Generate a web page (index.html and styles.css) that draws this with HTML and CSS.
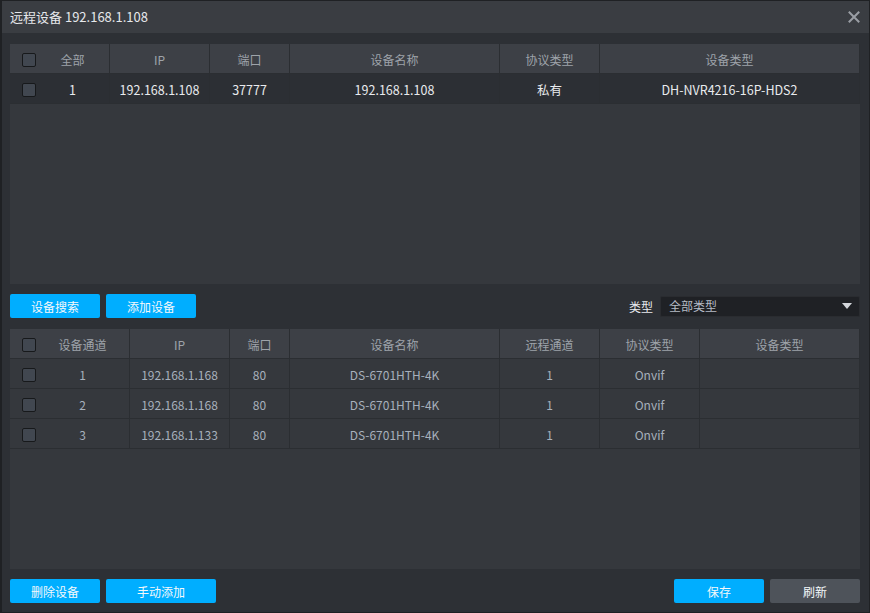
FILE: index.html
```html
<!DOCTYPE html>
<html lang="zh-CN">
<head>
<meta charset="utf-8">
<title>远程设备</title>
<link rel="stylesheet" href="styles.css">
</head>
<body>
<div class="window">
  <div class="titlebar">
    <span class="title">远程设备 192.168.1.108</span>
    <svg class="close" width="12" height="12" viewBox="0 0 12 12"><path d="M1.5 1.5 L10.5 10.5 M10.5 1.5 L1.5 10.5" stroke="#9a9ea5" stroke-width="2" stroke-linecap="square"/></svg>
  </div>
  <div class="content">
    <div class="panel">
      <div class="grid top-grid">
        <div class="hcell first"><span class="cb"></span><span class="lbl">全部</span></div>
        <div class="hcell">IP</div>
        <div class="hcell">端口</div>
        <div class="hcell">设备名称</div>
        <div class="hcell">协议类型</div>
        <div class="hcell">设备类型</div>
        <div class="cell sel first"><span class="cb"></span><span class="lbl">1</span></div>
        <div class="cell sel">192.168.1.108</div>
        <div class="cell sel">37777</div>
        <div class="cell sel">192.168.1.108</div>
        <div class="cell sel">私有</div>
        <div class="cell sel">DH-NVR4216-16P-HDS2</div>
      </div>
    </div>
    <div class="toolbar">
      <button class="btn">设备搜索</button>
      <button class="btn">添加设备</button>
      <div class="spacer"></div>
      <span class="type-label">类型</span>
      <div class="select"><span>全部类型</span><svg width="10" height="6" viewBox="0 0 10 6"><path d="M0 0 H10 L5 6 Z" fill="#d4d7dc"/></svg></div>
    </div>
    <div class="panel bottom">
      <div class="grid bot-grid">
        <div class="hcell first"><span class="cb"></span><span class="lbl">设备通道</span></div>
        <div class="hcell">IP</div>
        <div class="hcell">端口</div>
        <div class="hcell">设备名称</div>
        <div class="hcell">远程通道</div>
        <div class="hcell">协议类型</div>
        <div class="hcell">设备类型</div>

        <div class="cell first"><span class="cb"></span><span class="lbl">1</span></div>
        <div class="cell">192.168.1.168</div>
        <div class="cell">80</div>
        <div class="cell">DS-6701HTH-4K</div>
        <div class="cell">1</div>
        <div class="cell">Onvif</div>
        <div class="cell"></div>

        <div class="cell first"><span class="cb"></span><span class="lbl">2</span></div>
        <div class="cell">192.168.1.168</div>
        <div class="cell">80</div>
        <div class="cell">DS-6701HTH-4K</div>
        <div class="cell">1</div>
        <div class="cell">Onvif</div>
        <div class="cell"></div>

        <div class="cell first"><span class="cb"></span><span class="lbl">3</span></div>
        <div class="cell">192.168.1.133</div>
        <div class="cell">80</div>
        <div class="cell">DS-6701HTH-4K</div>
        <div class="cell">1</div>
        <div class="cell">Onvif</div>
        <div class="cell"></div>
      </div>
    </div>
    <div class="footer">
      <button class="btn">删除设备</button>
      <button class="btn wide">手动添加</button>
      <div class="spacer"></div>
      <button class="btn">保存</button>
      <button class="btn gray">刷新</button>
    </div>
  </div>
</div>
</body>
</html>
```

FILE: styles.css
```css
* { box-sizing: border-box; }
html, body { margin: 0; padding: 0; background: #2d3035; }
body {
  font-family: "Noto Sans CJK SC", "Noto Sans", sans-serif;
  font-size: 12px;
}
.window {
  width: 870px;
  height: 613px;
  background: #2d3035;
  border: 1px solid #1f2124;
  border-left-width: 2px;
  display: flex;
  flex-direction: column;
}
.titlebar {
  height: 32px;
  background: #3a3d42;
  display: flex;
  align-items: center;
  padding: 0 9px 1px 8px;
  flex: none;
}
.title {
  color: #e6e8eb;
  font-size: 13px;
  flex: 1;
}
.close { display: block; margin-right: 0; }
.content {
  padding: 11px 9px 0 8px;
  display: flex;
  flex-direction: column;
}
.panel {
  height: 240px;
  background: #35383d;
  flex: none;
}
.grid {
  display: grid;
  grid-auto-rows: 30px;
}
.top-grid { grid-template-columns: 100px 100px 80px 210px 100px 260px; }
.bot-grid { grid-template-columns: 120px 100px 60px 210px 100px 100px 160px; }
.hcell, .cell {
  display: flex;
  align-items: center;
  justify-content: center;
  border-right: 1px solid #2b2e32;
  border-bottom: 1px solid #2b2e32;
  white-space: nowrap;
  padding-top: 1px;
}
.hcell {
  background: #3d4046;
  color: #9ea3aa;
}
.cell {
  background: #35383d;
  color: #a7b0bc;
}
.cell.sel {
  background: #2c2f34;
  color: #e9ebee;
  font-size: 12.5px;
}
.first { justify-content: flex-start; padding-left: 12px; }
.first .lbl { flex: 1; text-align: center; }
.cb {
  width: 14px;
  height: 14px;
  border: 1px solid #17191b;
  border-radius: 2px;
  background: #414750;
  flex: none;
  margin-top: 1px;
}
.toolbar, .footer {
  height: 24px;
  margin-top: 10px;
  display: flex;
  align-items: center;
  gap: 6px;
  flex: none;
}
.panel.bottom { margin-top: 11px; }
.spacer { flex: 1; }
.btn {
  width: 90px;
  height: 24px;
  border: none;
  border-radius: 2px;
  background: #00aeff;
  color: #f4f8fb;
  font-family: inherit;
  font-size: 12px;
  padding: 0;
}
.btn.wide { width: 110px; }
.btn.gray { background: #4e535a; }
.type-label {
  color: #e8eaed;
  margin-right: 1px;
}
.select {
  width: 200px;
  height: 21px;
  background: #1f2125;
  border: 1px solid #2a2c30;
  border-radius: 2px;
  display: flex;
  align-items: center;
  justify-content: space-between;
  padding: 0 7px 1px 8px;
  color: #b6bcc5;
}
```
